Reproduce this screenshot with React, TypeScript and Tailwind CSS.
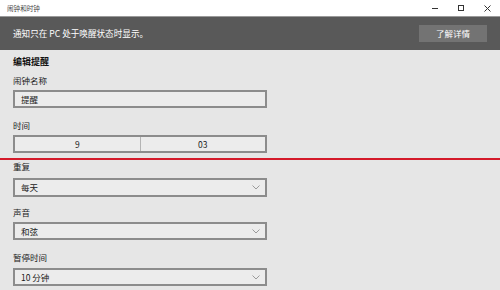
import React from "react";

const font = { fontFamily: '"Noto Sans CJK SC", "Noto Sans", sans-serif' };

function Chevron() {
  return (
    <svg width="8" height="5" viewBox="0 0 8 5" className="mr-[5px]">
      <path d="M0.5 0.5 L4 4 L7.5 0.5" fill="none" stroke="#9a9a9a" strokeWidth="1" />
    </svg>
  );
}

function Select({ value, h = "h-[19px]" }: { value: string; h?: string }) {
  return (
    <div className={`w-[254px] ${h} border-2 border-[#8c8c8c] bg-[#ececec] flex items-center justify-between pl-[6px]`}>
      <span className="text-[8.5px] leading-none text-[#1a1a1a]">{value}</span>
      <Chevron />
    </div>
  );
}

export default function App() {
  return (
    <div className="w-[500px] h-[290px] overflow-hidden bg-[#e6e6e6] flex flex-col" style={font}>
      {/* title bar */}
      <div className="h-[16px] bg-white flex items-center justify-between shrink-0">
        <span className="pl-[7px] text-[6.6px] leading-none text-[#444]">闹钟和时钟</span>
        <div className="flex items-center h-full">
          <div className="w-[26px] flex justify-center">
            <div className="w-[6px] h-[1px] bg-[#333] mt-[1px]" />
          </div>
          <div className="w-[26px] flex justify-center">
            <div className="w-[6px] h-[6px] border border-[#333]" />
          </div>
          <div className="w-[26px] flex justify-center">
            <svg width="7" height="7" viewBox="0 0 7 7">
              <path d="M0.5 0.5 L6.5 6.5 M6.5 0.5 L0.5 6.5" stroke="#333" strokeWidth="1" />
            </svg>
          </div>
        </div>
      </div>
      <div className="h-[1px] bg-[#9a9a9a] shrink-0" />
      {/* notification bar */}
      <div className="h-[33px] bg-[#595959] flex items-center justify-between pl-[13px] pr-[13px] shrink-0">
        <span className="text-[8.6px] leading-none text-white">通知只在 PC 处于唤醒状态时显示。</span>
        <div className="w-[68px] h-[17px] bg-[#737373] flex items-center justify-center">
          <span className="text-[8.5px] leading-none text-white">了解详情</span>
        </div>
      </div>
      {/* content */}
      <div className="flex flex-col">
        <div className="pl-[13px] flex flex-col">
          <div className="mt-[6px] h-[12px] flex items-center text-[9px] font-bold text-[#111]">编辑提醒</div>
          <div className="mt-[6px] h-[12px] flex items-center text-[8.5px] text-[#1a1a1a]">闹钟名称</div>
          <div className="mt-[4px] w-[254px] h-[18px] border-2 border-[#8c8c8c] bg-[#ececec] flex items-center pl-[6px]">
            <span className="text-[8.5px] leading-none text-[#1a1a1a]">提醒</span>
          </div>
          <div className="mt-[11px] h-[12px] flex items-center text-[8.5px] text-[#1a1a1a]">时间</div>
          <div className="mt-[4px] w-[254px] h-[18px] border-2 border-[#8c8c8c] bg-[#ececec] flex">
            <div className="flex-1 flex items-center justify-center border-r border-[#b4b4b4]">
              <span className="text-[8.5px] leading-none text-[#1a1a1a]">9</span>
            </div>
            <div className="flex-1 flex items-center justify-center">
              <span className="text-[8.5px] leading-none text-[#1a1a1a]">03</span>
            </div>
          </div>
        </div>
        <div className="mt-[5px] h-[2px] bg-[#d41a2a]" />
        <div className="pl-[13px] flex flex-col">
          <div className="h-[12px] flex items-center text-[8.5px] text-[#1a1a1a]">重复</div>
          <div className="mt-[6px]">
            <Select value="每天" />
          </div>
          <div className="mt-[9px] h-[12px] flex items-center text-[8.5px] text-[#1a1a1a]">声音</div>
          <div className="mt-[4px]">
            <Select value="和弦" h="h-[18px]" />
          </div>
          <div className="mt-[11px] h-[12px] flex items-center text-[8.5px] text-[#1a1a1a]">暂停时间</div>
          <div className="mt-[5px]">
            <Select value="10 分钟" h="h-[18px]" />
          </div>
        </div>
      </div>
    </div>
  );
}
